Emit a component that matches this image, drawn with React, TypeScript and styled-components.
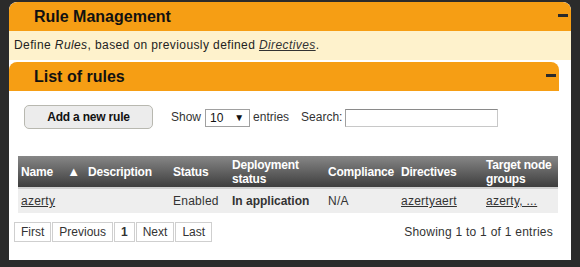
import styled, { createGlobalStyle } from "styled-components";

const GlobalStyle = createGlobalStyle`
  html, body {
    margin: 0;
    padding: 0;
    background: #2b2b2b;
    font-family: "Liberation Sans", Arial, sans-serif;
    font-size: 12px;
    color: #333;
  }
`;

const columns = [
  { title: "Name", width: 67 },
  { title: "Description", width: 85 },
  { title: "Status", width: 59 },
  { title: "Deployment status", width: 96 },
  { title: "Compliance", width: 73 },
  { title: "Directives", width: 85 },
  { title: "Target node groups", width: 75 },
];

const App = () => {
  return (
    <>
      <GlobalStyle />
      <Page>
        <Panel>
          <PanelHeader>
            <Title>Rule Management</Title>
            <Minus />
          </PanelHeader>
          <Intro>
            Define <em>Rules</em>, based on previously defined{" "}
            <IntroLink>Directives</IntroLink>.
          </Intro>
          <InnerPanel>
            <PanelHeader>
              <Title>List of rules</Title>
              <Minus />
            </PanelHeader>
            <Toolbar>
              <AddButton>Add a new rule</AddButton>
              <Label>Show</Label>
              <Select>
                <span>10</span>
                <Arrow>▼</Arrow>
              </Select>
              <Label>entries</Label>
              <Label $wide>Search:</Label>
              <SearchInput />
            </Toolbar>
            <Table>
              <colgroup>
                {columns.map((c) => (
                  <col key={c.title} style={{ width: c.width }} />
                ))}
              </colgroup>
              <thead>
                <tr>
                  <Th>
                    <NameHead>
                      Name<SortIcon>▲</SortIcon>
                    </NameHead>
                  </Th>
                  {columns.slice(1).map((c) => (
                    <Th key={c.title}>{c.title}</Th>
                  ))}
                </tr>
              </thead>
              <tbody>
                <Row>
                  <Td>
                    <CellLink>azerty</CellLink>
                  </Td>
                  <Td />
                  <Td>Enabled</Td>
                  <Td $bold>In application</Td>
                  <Td>N/A</Td>
                  <Td>
                    <CellLink>azertyaert</CellLink>
                  </Td>
                  <Td>
                    <CellLink>azerty, ...</CellLink>
                  </Td>
                </Row>
              </tbody>
            </Table>
            <Footer>
              <Pager>
                <PageButton>First</PageButton>
                <PageButton>Previous</PageButton>
                <PageButton $active>1</PageButton>
                <PageButton>Next</PageButton>
                <PageButton>Last</PageButton>
              </Pager>
              <Info>Showing 1 to 1 of 1 entries</Info>
            </Footer>
          </InnerPanel>
        </Panel>
      </Page>
    </>
  );
};

const Page = styled.div`
  padding: 2px 0 0 9px;
`;

const Panel = styled.div`
  width: 562px;
  height: 258px;
  background: #fff;
  border-radius: 8px 8px 0 0;
  overflow: hidden;
`;

const PanelHeader = styled.div`
  display: flex;
  align-items: center;
  justify-content: space-between;
  height: 29px;
  padding: 0 3px 0 25px;
  background: #f69e14;
  border-radius: 8px 8px 0 0;
`;

const Title = styled.h2`
  margin: 0;
  font-size: 16px;
  font-weight: bold;
  color: #111;
`;

const Minus = styled.span`
  width: 10px;
  height: 3px;
  margin-bottom: 2px;
  background: #2a2a2a;
`;

const Intro = styled.div`
  height: 29px;
  line-height: 29px;
  padding-left: 5px;
  background: #fef2cc;
  color: #222;
  letter-spacing: 0.4px;

  em {
    font-style: italic;
  }
`;

const IntroLink = styled.a`
  font-style: italic;
  text-decoration: underline;
  color: #333;
`;

const InnerPanel = styled.div`
  width: 550px;
  margin-top: 2px;
`;

const Toolbar = styled.div`
  display: flex;
  align-items: center;
  height: 24px;
  margin: 14px 0 0 15px;
`;

const AddButton = styled.button`
  box-sizing: border-box;
  width: 129px;
  height: 24px;
  margin-right: 18px;
  border: 1px solid #b8b8b0;
  border-radius: 5px;
  background: #ececec;
  font-family: inherit;
  font-size: 12px;
  font-weight: bold;
  color: #111;
  letter-spacing: -0.2px;
  padding: 0;
`;

const Label = styled.span<{ $wide?: boolean }>`
  color: #333;
  margin-left: ${({ $wide }) => ($wide ? "9px" : "0")};
  margin-right: 3px;
`;

const Select = styled.span`
  box-sizing: border-box;
  display: flex;
  align-items: center;
  justify-content: space-between;
  width: 45px;
  height: 18px;
  margin: 1px 3px 0 1px;
  padding: 0 5px 0 4px;
  border: 1px solid #a0a0a0;
  background: #fff;
  font-size: 12px;
  color: #111;
`;

const Arrow = styled.span`
  font-size: 10px;
`;

const SearchInput = styled.span`
  box-sizing: border-box;
  width: 153px;
  height: 18px;
  margin-top: 1px;
  border: 1px solid #c8c8c8;
  border-top-color: #8a8a8a;
  border-left-color: #a0a0a0;
  background: #fff;
`;

const Table = styled.table`
  width: 540px;
  margin: 27px 0 0 9px;
  border-collapse: collapse;
  table-layout: fixed;
`;

const Th = styled.th`
  height: 31px;
  padding: 0 3px;
  text-align: left;
  vertical-align: middle;
  font-size: 12px;
  font-weight: bold;
  line-height: 14px;
  color: #fff;
  letter-spacing: -0.2px;
  background: linear-gradient(#878787, #3d3d3d);
`;

const NameHead = styled.div`
  display: flex;
  justify-content: space-between;
  align-items: center;
`;

const SortIcon = styled.span`
  font-size: 13px;
  margin-right: 2px;
`;

const Row = styled.tr`
  background: #eeeeee;
  border-top: 2px solid #d0d0d0;
`;

const Td = styled.td<{ $bold?: boolean }>`
  height: 24px;
  padding: 0 3px;
  font-weight: ${({ $bold }) => ($bold ? "bold" : "normal")};
  letter-spacing: ${({ $bold }) => ($bold ? "0" : "0.25px")};
  color: #333;
  white-space: nowrap;
`;

const CellLink = styled.a`
  color: #333;
  text-decoration: underline;
`;

const Footer = styled.div`
  display: flex;
  align-items: center;
  justify-content: space-between;
  margin: 9px 6px 0 5px;
`;

const Pager = styled.div`
  display: flex;
  gap: 1px;
`;

const PageButton = styled.span<{ $active?: boolean }>`
  box-sizing: border-box;
  height: 20px;
  line-height: 18px;
  padding: 0 6px;
  border: 1px solid #cfcfcf;
  font-weight: ${({ $active }) => ($active ? "bold" : "normal")};
  color: #333;
`;

const Info = styled.span`
  color: #333;
  letter-spacing: 0.25px;
`;

export default App;
